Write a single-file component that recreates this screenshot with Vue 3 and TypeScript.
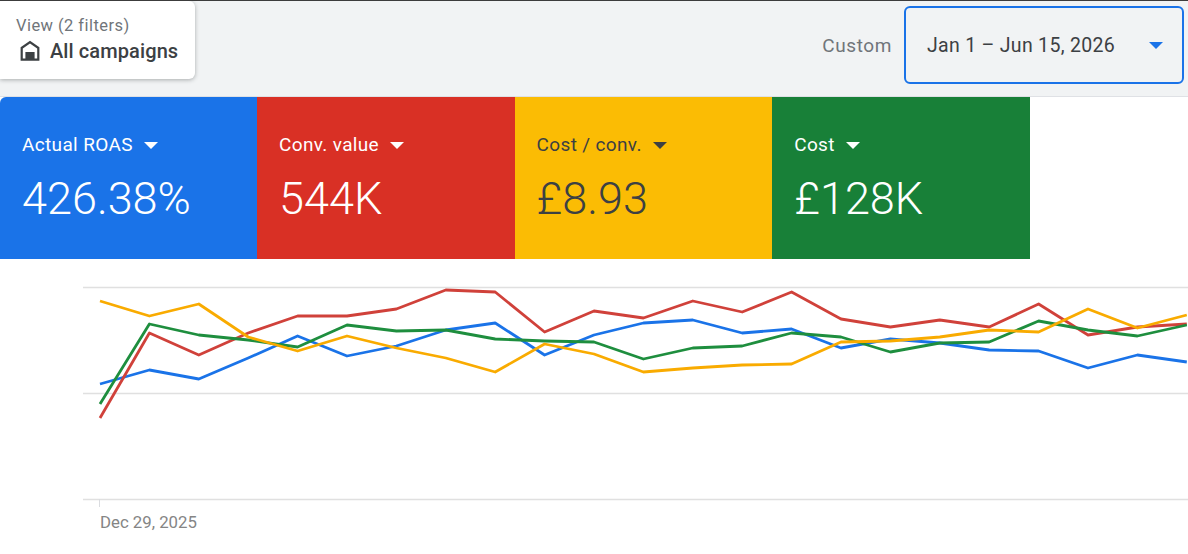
<template>
  <div class="page">
    <header class="top-bar">
      <div class="view-card">
        <div class="view-label">View (2 filters)</div>
        <div class="view-value">
          <svg class="home-icon" viewBox="0 0 24 24" width="24" height="24">
            <path d="M12 1.8 2.6 8.2V21.8H21.4V8.2ZM4.8 19.6V9.4L12 4.5l7.2 4.9v10.2H16.6V13H7.4v6.6Z" fill="#3c4043" fill-rule="evenodd" />
            <rect x="8.4" y="14" width="7.2" height="6" fill="#3c4043" />
          </svg>
          <span>All campaigns</span>
        </div>
      </div>
      <div class="date-area">
        <span class="custom">Custom</span>
        <div class="date-box">
          <span>Jan 1 – Jun 15, 2026</span>
          <span class="caret caret-blue"></span>
        </div>
      </div>
    </header>

    <section class="tiles">
      <div v-for="tile in tiles" :key="tile.label" class="tile" :class="tile.cls">
        <div class="tile-label">
          <span>{{ tile.label }}</span>
          <span class="caret"></span>
        </div>
        <div class="tile-value">{{ tile.value }}</div>
      </div>
    </section>

    <section class="chart">
      <svg class="chart-svg" viewBox="0 259 1188 250" width="1188" height="250">
        <line v-for="y in [287.5, 393.5, 499.5]" :key="y" x1="83" x2="1188" :y1="y" :y2="y" stroke="#e0e0e0" stroke-width="1.4" />
        <line x1="99.5" x2="99.5" y1="499" y2="507" stroke="#dadce0" />
        <polyline
          v-for="s in series"
          :key="s.color"
          :points="toPoints(s.values)"
          :stroke="s.color"
          fill="none"
          stroke-width="2.8"
          stroke-linejoin="round"
        />
      </svg>
      <div class="axis-label">Dec 29, 2025</div>
    </section>
  </div>
</template>

<script setup lang="ts">
const tiles = [
  { label: 'Actual ROAS', value: '426.38%', cls: 'blue' },
  { label: 'Conv. value', value: '544K', cls: 'red' },
  { label: 'Cost / conv.', value: '£8.93', cls: 'yellow' },
  { label: 'Cost', value: '£128K', cls: 'green' },
]

// y values read per day, x step is fixed
const series = [
  {
    color: '#1a73e8',
    values: [384, 370, 379, 358, 336, 356, 346, 330, 323, 355, 335, 323, 320, 333, 329, 348, 339, 343, 350, 351, 368, 355, 362],
  },
  {
    color: '#d0413a',
    values: [418, 333, 355, 333, 316, 316, 309, 290, 292, 332, 311, 318, 301, 312, 292, 319, 327, 320, 327, 304, 335, 327, 324],
  },
  {
    color: '#1e8e3e',
    values: [404, 324, 335, 340, 347, 325, 331, 330, 339, 341, 342, 359, 348, 346, 333, 337, 352, 343, 342, 321, 330, 336, 325],
  },
  {
    color: '#f9ab00',
    values: [301, 316, 304, 337, 351, 336, 348, 358, 372, 344, 354, 372, 368, 365, 364, 342, 341, 337, 330, 332, 309, 328, 315],
  },
]

function toPoints(values: number[]): string {
  return values.map((y, i) => `${100 + i * 49.4},${y}`).join(' ')
}
</script>

<style scoped>
.page {
  width: 1188px;
  height: 554px;
  overflow: hidden;
  background: #fff;
  font-family: Roboto, 'Liberation Sans', sans-serif;
}

.top-bar {
  box-sizing: border-box;
  height: 97px;
  background: #f1f3f4;
  border-top: 1px solid #3c3c3c;
  border-bottom: 1px solid #dfe1e5;
  display: flex;
  justify-content: space-between;
  align-items: flex-start;
}

.view-card {
  box-sizing: border-box;
  width: 195px;
  height: 78px;
  padding: 15px 0 0 16px;
  background: #fff;
  border-radius: 0 6px 6px 0;
  box-shadow: 0 1px 4px rgba(60, 64, 67, 0.4);
}

.view-label {
  font-size: 16.5px;
  line-height: 20px;
  letter-spacing: 0.45px;
  color: #70757a;
}

.view-value {
  display: flex;
  align-items: center;
  gap: 8px;
  margin-top: 3px;
  margin-left: 2px;
  font-size: 20px;
  font-weight: 500;
  letter-spacing: 0.1px;
  color: #3c4043;
}

.date-area {
  display: flex;
  align-items: center;
  gap: 12px;
  margin-top: 5px;
  margin-right: 4px;
}

.custom {
  font-size: 19px;
  letter-spacing: 0.6px;
  color: #70757a;
}

.date-box {
  box-sizing: border-box;
  width: 280px;
  height: 78px;
  padding: 0 19px 0 21px;
  border: 2.5px solid #1a73e8;
  border-radius: 6px;
  display: flex;
  align-items: center;
  justify-content: space-between;
  font-size: 19.5px;
  letter-spacing: 0.3px;
  color: #3c4043;
}

.caret {
  display: inline-block;
  width: 0;
  height: 0;
  border-left: 7px solid transparent;
  border-right: 7px solid transparent;
  border-top: 7px solid currentColor;
}

.caret-blue {
  color: #1a73e8;
}

.tiles {
  display: flex;
  height: 162px;
}

.tile {
  box-sizing: border-box;
  width: 257.6px;
  padding: 36px 0 0 22px;
  color: #fff;
}

.tile-label {
  display: flex;
  align-items: center;
  gap: 11px;
  font-size: 19px;
  line-height: 24px;
  letter-spacing: 0.35px;
}

.tile-value {
  margin-top: 14px;
  font-size: 45px;
  font-weight: 350;
  line-height: 56px;
}

.blue {
  width: 257px;
  background: #1a73e8;
  border-top-left-radius: 6px;
}

.red {
  background: #d93025;
}

.yellow {
  background: #fbbc04;
  color: #3c4043;
}

.green {
  background: #188038;
}

.chart-svg {
  display: block;
}

.axis-label {
  padding: 3px 0 0 100px;
  font-size: 16.8px;
  line-height: 20px;
  color: #858585;
}
</style>
